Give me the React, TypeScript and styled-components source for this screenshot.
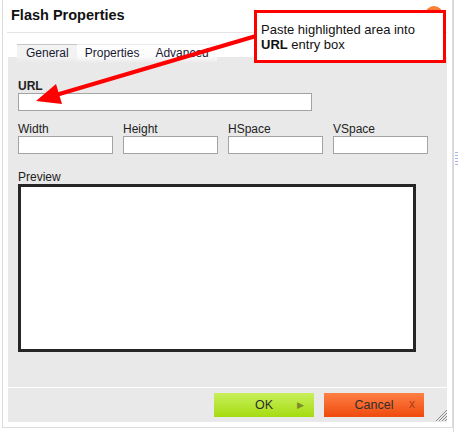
import React from "react";
import styled, { createGlobalStyle } from "styled-components";

const GlobalStyle = createGlobalStyle`
  html, body { margin: 0; padding: 0; background: #ffffff; }
  body { font-family: "Liberation Sans", Arial, sans-serif; }
  * { box-sizing: border-box; }
`;

const Page = styled.div`
  position: relative;
  width: 458px;
  height: 432px;
  overflow: hidden;
  display: flex;
  background: #ffffff;
`;

const Dialog = styled.div`
  margin-left: 2px;
  width: 452px;
  height: 428px;
  border: 1px solid #dcdcdc;
  border-top: none;
  padding: 0 5px 4px 5px;
  display: flex;
  flex-direction: column;
  background: #ffffff;
`;

const SideStrip = styled.div`
  flex: 1;
  border-left: 1px solid #d8d8d8;
  display: flex;
  flex-direction: column;
  gap: 2px;
  padding-top: 152px;
`;

const SideLine = styled.div<{ $w: number }>`
  height: 1px;
  width: ${(p) => p.$w}px;
  margin-left: 1px;
  background: #a9b1e6;
`;

const Header = styled.div`
  height: 33px;
  margin-left: -1px;
  border-bottom: 1px solid #e4e4e4;
  display: flex;
  align-items: flex-start;
  justify-content: space-between;
`;

const Title = styled.div`
  font-size: 14.5px;
  font-weight: bold;
  color: #111;
  padding-left: 4px;
  padding-top: 7px;
  line-height: 17px;
`;

const CloseDot = styled.div`
  width: 18px;
  height: 18px;
  border-radius: 50%;
  margin-top: 6px;
  margin-right: 4px;
  background: radial-gradient(circle at 50% 30%, #ff8a3c, #f25a12);
`;

const TabRow = styled.div`
  margin-top: 11px;
  height: 19px;
  padding-left: 9px;
  display: flex;
  background: linear-gradient(to bottom, #ffffff 0, #ffffff 13px, #e9e9e9 13px);
`;

const Tab = styled.div<{ $active?: boolean }>`
  height: 19px;
  padding: 0 8px 0 ${(p) => (p.$active ? 9 : 8)}px;
  font-size: 12px;
  line-height: 17px;
  color: #1a1a33;
  border-top: 1px solid ${(p) => (p.$active ? "#c6c6c6" : "transparent")};
  background: ${(p) =>
    p.$active
      ? "linear-gradient(to bottom, #f3f3f3 0, #f1f1f1 70%, #e9e9e9 100%)"
      : "linear-gradient(to bottom, #ffffff 0, #fbfbfb 65%, #e9e9e9 100%)"};
`;

const Panel = styled.div`
  height: 325px;
  background: #e9e9e9;
  padding: 16px 10px 0 10px;
  border-bottom: 1px solid #ffffff;
  display: flex;
  flex-direction: column;
`;

const Label = styled.div<{ $bold?: boolean }>`
  font-size: 12px;
  line-height: 14px;
  height: 14px;
  color: #222;
  font-weight: ${(p) => (p.$bold ? "bold" : "normal")};
`;

const TextInput = styled.div<{ $w: number }>`
  width: ${(p) => p.$w}px;
  height: 18px;
  background: #ffffff;
  border: 1px solid #a3a3a3;
`;

const FieldGrid = styled.div`
  margin-top: 11px;
  display: grid;
  grid-template-columns: repeat(4, 95px);
  column-gap: 10px;
`;

const Field = styled.div`
  display: flex;
  flex-direction: column;
`;

const PreviewLabel = styled(Label)`
  margin-top: 16px;
`;

const PreviewBox = styled.div`
  width: 398px;
  height: 168px;
  background: #ffffff;
  border: 3px solid #262626;
`;

const Footer = styled.div`
  position: relative;
  height: 34px;
  background: #e9e9e9;
  padding: 5px 23px 0 0;
  display: flex;
  justify-content: flex-end;
  gap: 10px;
`;

const Button = styled.div<{ $variant: "ok" | "cancel" }>`
  position: relative;
  width: 100px;
  height: 24px;
  font-size: 12.5px;
  line-height: 24px;
  text-align: center;
  color: #2e2e2e;
  background: ${(p) =>
    p.$variant === "ok"
      ? "linear-gradient(to bottom, #c8ef5c 0%, #a5dc10 100%)"
      : "linear-gradient(to bottom, #ff8046 0%, #ef4a0c 100%)"};
`;

const ButtonMark = styled.span`
  position: absolute;
  right: 9px;
  top: 0;
  font-size: 12px;
  line-height: 23px;
`;

const OkMark = styled(ButtonMark)`
  color: #7c8a2a;
  font-size: 9px;
  line-height: 24px;
  right: 10px;
`;

const CancelMark = styled(ButtonMark)`
  color: #a8401a;
`;

const Grip = styled.svg`
  position: absolute;
  right: 0;
  bottom: 1px;
`;

const Callout = styled.div`
  position: absolute;
  left: 254px;
  top: 10px;
  width: 192px;
  height: 53px;
  border: 3px solid #ff0000;
  background: #ffffff;
  padding: 9px 0 0 4px;
  font-size: 13px;
  line-height: 15px;
  color: #111;
`;

const ArrowLayer = styled.svg`
  position: absolute;
  left: 0;
  top: 0;
  pointer-events: none;
`;

export default function App() {
  return (
    <>
      <GlobalStyle />
      <Page>
        <Dialog>
          <Header>
            <Title>Flash Properties</Title>
            <CloseDot />
          </Header>
          <TabRow>
            <Tab $active>General</Tab>
            <Tab>Properties</Tab>
            <Tab>Advanced</Tab>
          </TabRow>
          <Panel>
            <Label $bold>URL</Label>
            <TextInput $w={294} />
            <FieldGrid>
              {["Width", "Height", "HSpace", "VSpace"].map((l) => (
                <Field key={l}>
                  <Label>{l}</Label>
                  <TextInput $w={95} />
                </Field>
              ))}
            </FieldGrid>
            <PreviewLabel>Preview</PreviewLabel>
            <PreviewBox />
          </Panel>
          <Footer>
            <Button $variant="ok">
              OK
              <OkMark>▶</OkMark>
            </Button>
            <Button $variant="cancel">
              Cancel
              <CancelMark>x</CancelMark>
            </Button>
            <Grip width="12" height="12" viewBox="0 0 12 12">
              <g stroke="#8a8a8a" strokeWidth="1">
                <line x1="1" y1="12" x2="12" y2="1" />
                <line x1="4" y1="12" x2="12" y2="4" />
                <line x1="7" y1="12" x2="12" y2="7" />
                <line x1="10" y1="12" x2="12" y2="10" />
              </g>
            </Grip>
          </Footer>
        </Dialog>
        <SideStrip>
          <SideLine $w={3} />
          <SideLine $w={3} />
          <SideLine $w={3} />
          <SideLine $w={3} />
          <SideLine $w={3} />
        </SideStrip>
        <Callout>
          Paste highlighted area into
          <br />
          <b>URL</b> entry box
        </Callout>
        <ArrowLayer width="458" height="432" viewBox="0 0 458 432">
          <line x1="256" y1="36" x2="56" y2="95" stroke="#ff0000" strokeWidth="4" />
          <polygon points="36,101 62,104 56,84" fill="#ff0000" />
        </ArrowLayer>
      </Page>
    </>
  );
}
